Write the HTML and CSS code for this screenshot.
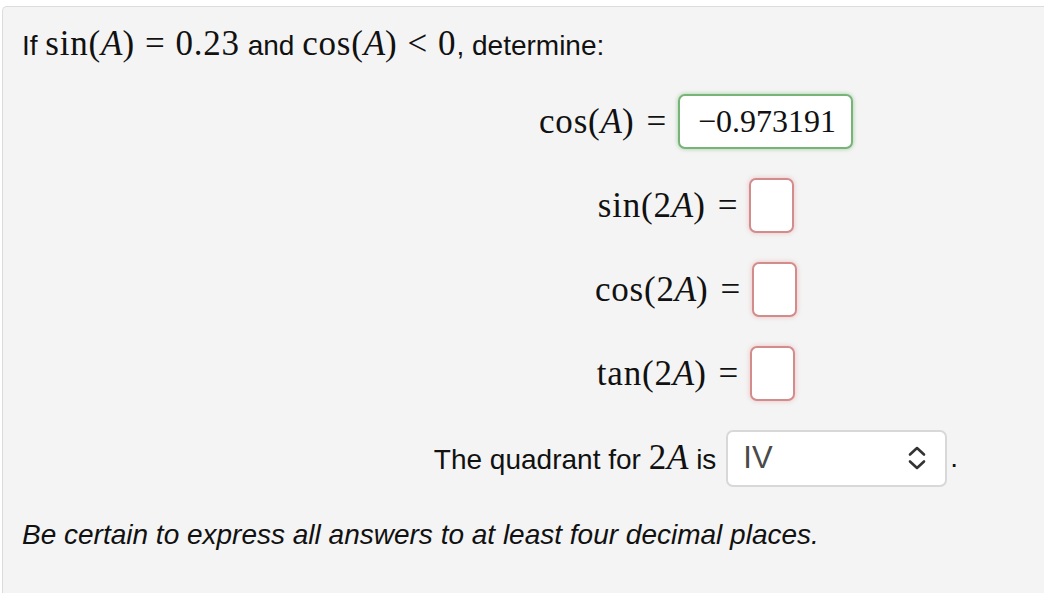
FILE: index.html
```html
<!DOCTYPE html>
<html>
<head>
<meta charset="utf-8">
<link rel="stylesheet" href="styles.css">
</head>
<body>
<div class="panel">
  <p class="intro">If <span class="m">sin(<i>A</i>)<span class="rel">=</span>0.23</span> and <span class="m">cos(<i>A</i>)<span class="rel">&lt;</span>0</span>, determine:</p>
  <div class="rows">
    <div class="row"><span class="m">cos(<i>A</i>)</span><span class="m rel">=</span><span class="box ok">−0.973191</span></div>
    <div class="row"><span class="m">sin(2<i>A</i>)</span><span class="m rel">=</span><span class="box bad"></span></div>
    <div class="row"><span class="m">cos(2<i>A</i>)</span><span class="m rel">=</span><span class="box bad"></span></div>
    <div class="row"><span class="m">tan(2<i>A</i>)</span><span class="m rel">=</span><span class="box bad"></span></div>
    <div class="row quad">
      <span>The quadrant for <span class="m">2<i>A</i></span> is</span>
      <span class="select"><span class="val">IV</span>
        <svg class="chev" width="20" height="26" viewBox="0 0 20 26"><path d="M3 9.5 L10 3 L17 9.5 M3 16.5 L10 23 L17 16.5" fill="none" stroke="#333" stroke-width="2.6" stroke-linecap="round" stroke-linejoin="round"/></svg>
      </span><span class="dot">.</span>
    </div>
  </div>
  <p class="note">Be certain to express all answers to at least four decimal places.</p>
</div>
</body>
</html>
```
FILE: styles.css
```css
html, body {
  margin: 0;
  padding: 0;
  background: #fff;
}
body {
  font-family: "Liberation Sans", Arial, sans-serif;
  font-size: 28px;
  color: #111;
}
.panel {
  box-sizing: border-box;
  margin: 6px 0 0 2px;
  width: 1042px;
  height: 587px;
  padding: 0 0 0 19px;
  background: #f4f4f4;
  border-top: 1px solid #dcdcdc;
  border-left: 1px solid #dcdcdc;
  border-radius: 5px 0 0 0;
}
.intro {
  margin: 0;
  padding-top: 16px;
  line-height: 42px;
}
.m {
  font-family: "Liberation Serif", "Times New Roman", serif;
  font-size: 35px;
  letter-spacing: 0.8px;
}
.m i {
  font-style: italic;
  letter-spacing: 0;
}
.intro .rel {
  margin: 0 10px;
}
.rows {
  margin-top: 27px;
  padding-left: 326px;
  display: flex;
  flex-direction: column;
  align-items: center;
  gap: 29px;
}
.row {
  display: flex;
  align-items: center;
  height: 55px;
}
.row > .rel {
  margin: 0 11px 0 12px;
}
.box {
  box-sizing: border-box;
  height: 55px;
  min-width: 45px;
  background: #fff;
  border-radius: 7px;
  display: inline-flex;
  align-items: center;
  font-family: "Liberation Serif", "Times New Roman", serif;
  font-size: 32px;
}
.box.ok {
  border: 2px solid #78b478;
  box-shadow: 0 0 4px rgba(90, 170, 90, 0.55);
  padding: 0 15px 0 18px;
}
.box.bad {
  border: 2px solid #d38c8c;
  box-shadow: 0 0 5px rgba(225, 110, 110, 0.4);
}
.quad {
  height: 56px;
}
.select {
  box-sizing: border-box;
  width: 221px;
  height: 57px;
  margin-left: 10px;
  background: #fff;
  border: 2px solid #d8d8d8;
  border-radius: 7px;
  display: flex;
  align-items: center;
  justify-content: space-between;
  padding: 0 18px 0 15px;
}
.val {
  color: #4a4a4a;
  font-size: 31px;
}
.chev {
  display: block;
}
.dot {
  margin-left: 3px;
}
.note {
  margin: 28px 0 0 0;
  line-height: 42px;
  font-style: italic;
}
```
